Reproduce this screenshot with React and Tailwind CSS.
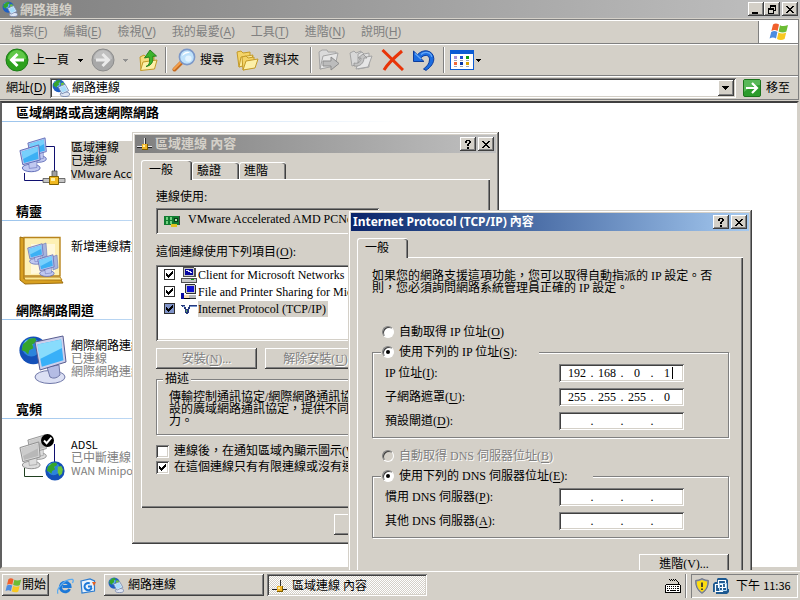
import React from "react";

const RAISED =
  "bg-[#d4d0c8] shadow-[inset_-1px_-1px_0_#404040,inset_1px_1px_0_#fff,inset_-2px_-2px_0_#808080]";
const SUNKEN =
  "shadow-[inset_1px_1px_0_#808080,inset_-1px_-1px_0_#fff,inset_2px_2px_0_#404040,inset_-2px_-2px_0_#d4d0c8]";
const FRAME =
  "bg-[#d4d0c8] shadow-[inset_-1px_-1px_0_#404040,inset_1px_1px_0_#d4d0c8,inset_-2px_-2px_0_#808080,inset_2px_2px_0_#fff]";
const SANS = "font-['Noto_Sans','Noto_Sans_CJK_TC',sans-serif]";
const SMALL_LATIN = "text-[11px] font-['Noto_Sans_CJK_TC',sans-serif]";
const SERIF = "font-['Liberation_Serif','Noto_Sans_CJK_TC',serif]";
const EMBOSS = "text-[#808080] [text-shadow:1px_1px_0_#fff]";

/* ---------- icons ---------- */

function Continents() {
  return (
    <g fill="#35a52c">
      <path d="M2 4 L5 1.4 L8 1 L8.5 3 L6.5 4 L7 6 L5 7 L4.5 9 L3 7.5 L1.3 7z" />
      <path d="M9 4 L11.5 3.5 L12.6 6 L12 9 L10 10.5 L9 8z" fill="#6cc63c" />
    </g>
  );
}

function NetIcon({ size = 17 }) {
  return (
    <svg width={size} height={size} viewBox="0 0 17 17" className="shrink-0" aria-hidden="true">
      <circle cx="6.5" cy="6.5" r="6" fill="#1f5fc4" />
      <circle cx="5" cy="4.6" r="3" fill="#5fb0ee" />
      <g transform="scale(.95)">
        <Continents />
      </g>
      <ellipse cx="12.2" cy="14.4" rx="4.4" ry="2.2" fill="#dfe6f4" stroke="#6d7fa8" strokeWidth=".8" />
      <path d="M6 7.6 L12.4 5 L15.8 11 L9.4 14z" fill="#e6edf8" stroke="#7286ad" strokeWidth=".8" />
      <path d="M7.2 8.2 L12 6.2 L14.4 10.6 L9.8 12.8z" fill="#a8dcfa" />
    </svg>
  );
}

function LanPlug() {
  return (
    <svg width="16" height="14" viewBox="0 0 16 14" shapeRendering="crispEdges" className="shrink-0" aria-hidden="true">
      <path d="M0 10h15v1H0z" fill="#202020" />
      <path d="M0 9h15v1H0z" fill="#e8e8f0" />
      <path d="M8 1h1v7H8z" fill="#303030" />
      <path d="M7 1h1v7H7z" fill="#f0f0f0" />
      <path d="M5 7h6v6H5z" fill="#806000" />
      <path d="M5 7h5v5H5z" fill="#f0b428" />
      <path d="M6 8h2v2H6z" fill="#fff0a0" />
    </svg>
  );
}

function Flag({ size = 20 }) {
  return (
    <svg width={size} height={size} viewBox="0 0 20 20" className="shrink-0" aria-hidden="true">
      <path d="M4 2.5 C6 1 8 1.2 10 2.6 L8.6 9 C6.6 7.8 4.6 7.8 2.4 9z" fill="#f0602c" />
      <path d="M11 3.2 C13 4.4 16 4.4 19 3 L17.4 9.4 C15 10.8 12 10.6 9.6 9.4z" fill="#6cbc34" />
      <path d="M2.2 10 C4.4 8.8 6.4 8.8 8.4 10 L7 16.6 C5 15.2 2.8 15.2 .6 16.6z" fill="#4c8ce0" />
      <path d="M9.4 10.6 C12 11.8 14.6 11.8 17.2 10.6 L15.6 17 C13 18.4 10.4 18.2 8 17z" fill="#f8c820" />
    </svg>
  );
}

function RoundArrow({ forward }) {
  return (
    <svg width="24" height="24" viewBox="0 0 24 24" className="shrink-0" aria-hidden="true">
      <circle cx="12" cy="12" r="11" fill={forward ? "#a8a8a8" : "#2ca01c"} stroke={forward ? "#8c8c8c" : "#1c7c18"} />
      <path d="M3 11 A9 9 0 0 1 21 11 Q12 15 3 11z" fill={forward ? "#c0c0c0" : "#60c848"} />
      <path
        d={forward ? "M5 12 H17 M11.5 6 L17.5 12 L11.5 18" : "M19 12 H7 M12.5 6 L6.5 12 L12.5 18"}
        fill="none"
        stroke={forward ? "#eaeaea" : "#fff"}
        strokeWidth="3"
      />
    </svg>
  );
}

function FolderUp() {
  return (
    <svg width="21" height="23" viewBox="0 0 21 23" className="shrink-0" aria-hidden="true">
      <path d="M2 8 L6 6 L8 8 L16 7 V18 L3 21z" fill="#f6dc7c" stroke="#c49a28" />
      <path d="M2.500 21.500 L5 13 L19 11 L16.500 20z" fill="#fdf0a8" stroke="#c49a28" />
      <path d="M8 17.500 C12 16 12 12 11 8 L6.500 9 L12 1 L18.500 7 L14.800 7.400 C15.500 13 13.500 16.500 8 17.500z" fill="#3cb42c" stroke="#1c7c18" strokeWidth=".9" />
    </svg>
  );
}

function Magnifier() {
  return (
    <svg width="24" height="24" viewBox="0 0 24 24" className="shrink-0" aria-hidden="true">
      <path d="M2.500 21.500 L9.500 14.500" stroke="#c46a20" strokeWidth="4" strokeLinecap="round" />
      <path d="M2 21 L9 14" stroke="#f4a04c" strokeWidth="2" strokeLinecap="round" />
      <circle cx="15" cy="9" r="7.6" fill="#bfe2fb" stroke="#7c98c8" strokeWidth="1.6" />
      <path d="M10 8 A5.5 5.5 0 0 1 18 4.4 Q13 5 10 8z" fill="#fff" />
      <circle cx="16.4" cy="10.6" r="3.2" fill="#e4f4ff" />
    </svg>
  );
}

function Folders() {
  return (
    <svg width="23" height="21" viewBox="0 0 23 21" className="shrink-0" aria-hidden="true">
      <path d="M1 2 L5 1 L7 3 L14 2 V12 L3 17z" fill="#f4d468" stroke="#c49a28" />
      <path d="M3 17 L5 7 L17 5 L14 14z" fill="#fdec9c" stroke="#c49a28" />
      <path d="M6 7 L10 6 L12 8 L18 7 V17 L7 20z" fill="#f4d468" stroke="#c49a28" />
      <path d="M7 20 L10 11 L22 9 L19 18z" fill="#fdf0a8" stroke="#c49a28" />
    </svg>
  );
}

function GrayFolder({ copy }) {
  return (
    <svg width="24" height="22" viewBox="0 0 24 22" className="shrink-0" aria-hidden="true">
      {copy ? (
        <>
          <path d="M1 4 L5 2 L7 4 L12 2 V14 L3 17z" fill="#d8d8d8" stroke="#a4a4a4" />
          <path d="M9 5 L13 3 L15 5 L20 4 V18 L9 20z" fill="#e0e0e0" stroke="#a4a4a4" />
          <path d="M7 20 L11 9 L23 7 L19 18z" fill="#e6e6e6" stroke="#a4a4a4" />
          <path d="M5 14 C9 15 12 13 12 9 L9 9 L14 5 L18 9 L15 9 C15 14 11 18 5 17z" fill="#c4c4c4" stroke="#909090" strokeWidth=".8" />
        </>
      ) : (
        <>
          <path d="M2 3 L5 1 H10 L11 3 H19 V16 L3 20z" fill="#dadada" stroke="#a4a4a4" />
          <path d="M3 20 L6 7 L21 4 L18 17z" fill="#e6e6e6" stroke="#a4a4a4" />
          <path d="M6 12 H14 V8 L22 14.5 L14 21 V17 H6z" fill="#bcbcbc" stroke="#8c8c8c" />
        </>
      )}
    </svg>
  );
}

function RedCross() {
  return (
    <svg width="23" height="22" viewBox="0 0 23 22" className="shrink-0" aria-hidden="true">
      <path d="M1.5 1 L22 21 M21 2 C14 8 7 14 3 21" fill="none" stroke="#e83408" strokeWidth="3" />
    </svg>
  );
}

function UndoIcon() {
  return (
    <svg width="23" height="22" viewBox="0 0 23 22" className="shrink-0" aria-hidden="true">
      <path d="M1.5 2 V12.5 H12 L8.6 9.2 C12 5 18 5.5 17.5 11 C17.3 14.5 15 17.5 11.5 20 L14 21.4 C19 18 22 14 21.8 9.4 C21.2 1 11 -.8 5.4 5.8z" fill="#1c6ce0" stroke="#0c3c9c" />
      <path d="M3 4.5 L9 10 M9 5.5 C13 2 19 3 19.8 8" fill="none" stroke="#64a8f8" strokeWidth="1.2" />
    </svg>
  );
}

function ViewsIcon() {
  return (
    <svg width="24" height="20" viewBox="0 0 24 20" shapeRendering="crispEdges" className="shrink-0" aria-hidden="true">
      <path d="M0 0h24v20H0z" fill="#0c5cd4" />
      <path d="M1 4h22v15H1z" fill="#fff" />
      <path d="M4 6h3v3H4z" fill="#a890d8" />
      <path d="M10 6h3v3h-3z" fill="#1c50d0" />
      <path d="M16 6h3v3h-3z" fill="#10a010" />
      <path d="M4 12h3v3H4z" fill="#f06838" />
      <path d="M10 12h3v3h-3z" fill="#0838a8" />
      <path d="M16 12h3v3h-3z" fill="#d8a000" />
      <path d="M4 10h3v1H4zM10 10h3v1h-3zM16 10h3v1h-3zM4 16h3v1H4zM10 16h3v1h-3zM16 16h3v1h-3z" fill="#a0a8b8" />
    </svg>
  );
}

function GoIcon() {
  return (
    <svg width="18" height="18" viewBox="0 0 18 18" className="shrink-0" aria-hidden="true">
      <rect x=".5" y=".5" width="17" height="17" rx="1.5" fill="#2c9c2c" stroke="#1c741c" />
      <path d="M1 1 H17 V6 Q9 6 1 13z" fill="#58b858" />
      <path d="M3 9 H14 M9 4 L14 9 L9 14" fill="none" stroke="#fff" strokeWidth="2.2" />
    </svg>
  );
}

function DownTri({ fill = "#000" }) {
  return (
    <svg width="5" height="3" viewBox="0 0 5 3" shapeRendering="crispEdges" aria-hidden="true">
      <path d="M0 0h5v1H0zM1 1h3v1H1zM2 2h1v1H2z" fill={fill} />
    </svg>
  );
}

function Pc({ x = 0, y = 0, s = 1, gray }) {
  const screen = gray ? "#b8b8b8" : "#3cb0f4";
  const glow = gray ? "#cccccc" : "#78d0fc";
  const body = gray ? "#dcdcdc" : "#c0c8f0";
  const line = gray ? "#8c8c8c" : "#5c68b4";
  return (
    <g transform={`translate(${x} ${y}) scale(${s})`}>
      <ellipse cx="13" cy="25.5" rx="9.5" ry="4" fill={body} stroke={line} />
      <path d="M10 17 L19 15 L19 25 L11 26z" fill={body} stroke={line} strokeWidth=".6" />
      <path d="M1 7 L21 1 L22.500 17 L4 22z" fill={body} stroke={line} />
      <path d="M2.800 8.200 L19.600 3 L20.800 15.900 L5.200 20.200z" fill={screen} />
      <path d="M2.800 8.200 L19.600 3 L20 8 L4.400 16z" fill={glow} />
    </g>
  );
}

function BigGlobe({ x, y, s }) {
  return (
    <g transform={`translate(${x} ${y}) scale(${s})`}>
      <circle cx="7" cy="7" r="6.8" fill="#1450b8" />
      <circle cx="6" cy="5.5" r="4.5" fill="#2c84dc" />
      <circle cx="4.6" cy="4" r="2" fill="#7cc4f4" />
      <Continents />
    </g>
  );
}

function BigLan() {
  return (
    <svg width="48" height="50" viewBox="0 0 48 50" className="shrink-0" aria-hidden="true">
      <path d="M26 9.5 H35.5 V36 M5.5 36 V43.5 H26" fill="none" stroke="#101070" />
      <Pc x={8} y={0} s={0.86} />
      <Pc x={0} y={7} s={0.94} />
      <path d="M24 41.500h22v4H24z" fill="#c4c4c4" stroke="#505050" strokeWidth=".8" />
      <path d="M33 34h5v6h-5z" fill="#a0a0a0" stroke="#505050" strokeWidth=".8" />
      <path d="M30.500 39.500h9v8h-9z" fill="#f0b820" stroke="#806000" />
      <path d="M32 41h4v3h-4z" fill="#fff0a0" />
    </svg>
  );
}

function BigWizard() {
  return (
    <svg width="48" height="50" viewBox="0 0 48 50" className="shrink-0" aria-hidden="true">
      <path d="M1 1 L5 2 V43 L42 44 L44 47 L6 48 L1 44z" fill="#d8a020" stroke="#9c6c0c" />
      <path d="M5 1.5 H41 V40 H5z" fill="#fdf0b4" stroke="#b8841c" strokeWidth="1.4" />
      <path d="M12 8 H36 V36 L12 38z" fill="#fff8dc" />
      <path d="M5 41 H41 L43 44 H6z" fill="#fce894" stroke="#b8841c" />
      <path d="M22 9 l5 -2 l1 13 l-5 2z" fill="#a8b4dc" stroke="#6878b8" strokeWidth=".6" />
      <Pc x={8} y={7} s={0.72} />
      <path d="M33 21 l5 -2 l1 13 l-5 2z" fill="#a8b4dc" stroke="#6878b8" strokeWidth=".6" />
      <Pc x={18} y={18} s={0.76} />
    </svg>
  );
}

function BigGateway() {
  return (
    <svg width="48" height="50" viewBox="0 0 48 50" className="shrink-0" aria-hidden="true">
      <BigGlobe x={0} y={1} s={2.05} />
      <ellipse cx="31" cy="42" rx="15" ry="6.5" fill="#dce0f4" stroke="#7078a8" />
      <path d="M28 32 L40 30 L41 40 Q36 45 31 42z" fill="#b4bce4" stroke="#7078a8" />
      <path d="M16 7 L44 1 L47 27 L21 35z" fill="#ccd0ec" stroke="#585c90" />
      <path d="M18.500 9.600 L42 4.400 L44.400 25.200 L22.800 31.800z" fill="#38b0f8" />
      <path d="M18.500 9.600 L42 4.400 L43 13 L21 24z" fill="#88dcfc" />
    </svg>
  );
}

function BigAdsl() {
  return (
    <svg width="48" height="50" viewBox="0 0 48 50" className="shrink-0" aria-hidden="true">
      <path d="M35.5 10 V30" fill="none" stroke="#101070" />
      <path d="M5.5 34 V42.5 H24" fill="none" stroke="#204020" />
      <Pc x={8} y={0} s={0.86} gray />
      <Pc x={0} y={7} s={0.94} gray />
      <circle cx="28.5" cy="6.5" r="6.5" fill="#000" />
      <path d="M25 6.5 L27.6 9.2 L32.4 3.6" fill="none" stroke="#fff" strokeWidth="2" />
      <BigGlobe x={26} y={27} s={1.42} />
    </svg>
  );
}

function CardIcon() {
  return (
    <svg width="16" height="13" viewBox="0 0 16 13" shapeRendering="crispEdges" className="shrink-0" aria-hidden="true">
      <path d="M0 1h15v9H0z" fill="#107c30" />
      <path d="M2 2h2v3H2zM6 2h2v3H6zM2 6h2v3H2zM6 6h2v3H6z" fill="#70d080" />
      <path d="M10 3h4v4h-4z" fill="#084018" />
      <path d="M11 4h2v2h-2z" fill="#b0e0b0" />
      <path d="M7 9h6v3H7z" fill="#e0c020" />
      <path d="M15 1h1v9h-1z" fill="#404040" />
    </svg>
  );
}

function ClientIcon() {
  return (
    <svg width="16" height="16" viewBox="0 0 16 16" shapeRendering="crispEdges" className="shrink-0" aria-hidden="true">
      <path d="M2 0h11v10H2z" fill="#c8c8c8" />
      <path d="M2 0h11v1H2zM2 0h1v10H2z" fill="#505050" />
      <path d="M4 2h8v6H4z" fill="#0808a0" />
      <path d="M5 3h3v1H5zM7 4h3v1H7zM9 5h2v1H9z" fill="#e0e0ff" />
      <path d="M13 1h2v9h-2zM3 9h11v1H3z" fill="#505050" />
      <path d="M0 11h15v4H0z" fill="#c8c8c8" stroke="#505050" strokeWidth="1" />
      <path d="M10 12h3v1h-3z" fill="#10a010" />
    </svg>
  );
}

function ShareIcon() {
  return (
    <svg width="16" height="16" viewBox="0 0 16 16" shapeRendering="crispEdges" className="shrink-0" aria-hidden="true">
      <path d="M4 0h10v9H4z" fill="#c8c8c8" />
      <path d="M4 0h10v1H4zM4 0h1v9H4zM14 1h1v9h-1zM5 9h9v1H5z" fill="#303030" />
      <path d="M6 2h7v6H6z" fill="#1010d0" />
      <path d="M5 11h10v4H5z" fill="#b8b8b8" />
      <path d="M5 14h10v1H5z" fill="#303030" />
      <path d="M0 9h3v6H0z" fill="#0808a0" />
      <path d="M3 11h5v3H3z" fill="#f4dcb8" />
      <path d="M3 14h6v1H3z" fill="#000" />
    </svg>
  );
}

function ProtocolIcon() {
  return (
    <svg width="16" height="12" viewBox="0 0 16 12" shapeRendering="crispEdges" className="shrink-0" aria-hidden="true">
      <path d="M0 2h4v1H0zM8 2h8v1H8zM1 3h3v1H1zM8 3h8v1H8zM3 4h2v2H3zM7 4h2v2H7zM4 6h4v4H4zM5 10h2v1H5z" fill="#24387c" />
      <path d="M9 3h7v1H9zM2 3h2v1H2z" fill="#7898d0" />
      <path d="M5 7h1v2H5z" fill="#60a860" />
    </svg>
  );
}

function IeIcon() {
  return (
    <svg width="17" height="17" viewBox="0 0 17 17" className="shrink-0" aria-hidden="true">
      <path d="M12.6 11 A4.8 4.8 0 1 1 13 8.6 H5.4" fill="none" stroke="#1c78d8" strokeWidth="3" />
      <path d="M1 15.6 C-1.6 11 8 .6 15.6 1.4 C16.6 2.2 16.2 3.8 15.4 5" fill="none" stroke="#5cacf0" strokeWidth="1.3" />
    </svg>
  );
}

function OutlookIcon() {
  return (
    <svg width="17" height="16" viewBox="0 0 17 16" className="shrink-0" aria-hidden="true">
      <path d="M1 3 L10 1 L14.500 3 V13 L2 15z" fill="#e8f2fc" stroke="#2c7cd0" strokeWidth="1.2" />
      <path d="M11.600 9.600 A3.600 3.600 0 1 1 9.800 5.400 M8 8.400 H12" fill="none" stroke="#1c78d8" strokeWidth="2" />
      <path d="M12 4 H16 L14 8z" fill="#e86020" />
    </svg>
  );
}

function KeyboardIcon() {
  return (
    <svg width="16" height="14" viewBox="0 0 16 14" shapeRendering="crispEdges" className="shrink-0" aria-hidden="true">
      <path d="M4 0h1v1H4zM5 1h1v1H5zM6 0h1v1H6zM7 1h1v1H7zM8 0h1v1H8zM9 1h1v1H9zM10 0h1v1h-1zM11 1h1v1h-1zM12 2h1v1h-1zM13 3h1v2h-1z" fill="#000" />
      <path d="M1 5h14v1H1zM0 6h1v7H0zM15 6h1v7h-1zM0 13h16v1H0z" fill="#000" />
      <path d="M1 6h14v7H1z" fill="#fff" />
      <path d="M2 7h1v1H2zM4 7h1v1H4zM6 7h1v1H6zM8 7h1v1H8zM10 7h1v1h-1zM12 7h2v1h-2zM2 9h1v1H2zM4 9h1v1H4zM6 9h1v1H6zM8 9h1v1H8zM10 9h1v1h-1zM12 9h2v1h-2zM2 11h2v1H2zM5 11h6v1H5zM12 11h2v1h-2z" fill="#000" />
    </svg>
  );
}

function ShieldIcon() {
  return (
    <svg width="14" height="16" viewBox="0 0 14 16" className="shrink-0" aria-hidden="true">
      <path d="M7 .6 Q10 2.4 13.4 2.4 Q13.8 11 7 15.4 Q.2 11 .6 2.4 Q4 2.4 7 .6z" fill="#8c94a8" stroke="#5c6478" strokeWidth=".8" />
      <path d="M7 2 Q9.6 3.4 12.2 3.5 Q12.4 10.4 7 14 Q1.6 10.4 1.8 3.5 Q4.4 3.4 7 2z" fill="#fcdc10" />
      <path d="M7 4.4 V9 M7 10.4 V12" stroke="#303030" strokeWidth="1.7" />
    </svg>
  );
}

function VmIcon() {
  return (
    <svg width="16" height="16" viewBox="0 0 16 16" className="shrink-0" aria-hidden="true">
      <path d="M5 0h8l2 2v9h1v3l-2 2H3v-2H0V6l2-2h2V1z" fill="#1c5890" />
      <path d="M5.500 2.500h7v7h-7zM2.500 6.500h7v7h-7z" fill="none" stroke="#fff" strokeWidth="1.2" />
      <path d="M6.500 5.500h7v7h-7z" fill="none" stroke="#b8dcf8" />
    </svg>
  );
}

/* ---------- shared controls ---------- */

function CaptionButton({ kind, label }) {
  return (
    <button type="button" aria-label={label} className={`flex h-[14px] w-4 items-center justify-center ${RAISED}`}>
      <svg width="10" height="9" viewBox="0 0 10 9" shapeRendering="crispEdges" aria-hidden="true">
        {kind === "close" && (
          <path d="M1 1h2v1h1v1h2V2h1V1h2v1H8v1H7v1H6v1h1v1h1v1h1v1H7V7H6V6H4v1H3v1H1V7h1V6h1V5h1V4H3V3H2V2H1z" fill="#000" />
        )}
        {kind === "min" && <path d="M1 7h6v2H1z" fill="#000" />}
        {kind === "restore" && (
          <path d="M3 0h6v2H3zM8 2h1v4H7V5h1zM3 2h1v1H3zM1 3h6v2H1zM1 5h1v4H1zM6 5h1v4H6zM2 8h4v1H2z" fill="#000" />
        )}
        {kind === "help" && (
          <path d="M3 0h4v1H3zM2 1h2v2H2zM6 1h2v2H6zM5 3h2v1H5zM4 4h2v2H4zM4 7h2v2H4z" fill="#000" />
        )}
      </svg>
    </button>
  );
}

function Hot({ text, k }) {
  return (
    <>
      {text}(<u className="underline-offset-2">{k}</u>)
    </>
  );
}

function CheckBox({ id, checked, shaded }) {
  return (
    <span className="grid shrink-0">
      <input
        id={id}
        type="checkbox"
        defaultChecked={checked}
        className={
          shaded === undefined
            ? `col-start-1 row-start-1 size-[13px] appearance-none bg-white ${SUNKEN}`
            : `col-start-1 row-start-1 size-[11px] appearance-none border border-[#303030] ${shaded ? "bg-[#7f93c8]" : "bg-white"}`
        }
      />
      {checked && (
        <svg viewBox="0 0 7 7" shapeRendering="crispEdges" className="pointer-events-none col-start-1 row-start-1 size-[7px] self-center justify-self-center" aria-hidden="true">
          <path d="M0 2h1v3H0zM1 3h1v3H1zM2 4h1v3H2zM3 3h1v3H3zM4 2h1v3H4zM5 1h1v3H5zM6 0h1v3H6z" fill="#000" />
        </svg>
      )}
    </span>
  );
}

function Radio({ id, name, checked, disabled, children }) {
  return (
    <span className="flex h-4 items-center">
      <span className="grid shrink-0">
        <input
          id={id}
          name={name}
          type="radio"
          defaultChecked={checked}
          disabled={disabled}
          className={`col-start-1 row-start-1 size-3 appearance-none rounded-full border border-t-[#808080] border-r-white border-b-white border-l-[#808080] shadow-[inset_1px_1px_0_#404040] ${disabled ? "bg-[#d4d0c8]" : "bg-white"}`}
        />
        {checked && (
          <span className="pointer-events-none col-start-1 row-start-1 size-1 self-center justify-self-center rounded-full bg-black" />
        )}
      </span>
      <label htmlFor={id} className={`pl-[5px] whitespace-nowrap ${disabled ? EMBOSS : ""}`}>
        {children}
      </label>
    </span>
  );
}

const IP_FIELD = "h-[14px] w-[26px] bg-transparent p-0 text-center outline-none";

function IpRow({ id, label, values = ["", "", "", ""], caret }) {
  return (
    <div role="group" aria-labelledby={id} className="flex h-[18px] items-center justify-between pr-11 pl-3">
      <span id={id}>{label}:</span>
      <span className={`flex h-[18px] w-[125px] items-center bg-white pl-[5px] ${SUNKEN}`}>
        {values.map((v, i) => (
          <React.Fragment key={i}>
            {i > 0 && <span className="w-1 text-center">.</span>}
            <span className="relative flex">
              <input aria-label={`${i + 1}`} defaultValue={v} className={IP_FIELD} />
              {caret && i === 3 && <span className="absolute top-px right-[7px] h-3 w-px bg-black" />}
            </span>
          </React.Fragment>
        ))}
      </span>
    </div>
  );
}

function Tab({ active, children }) {
  return (
    <button
      type="button"
      role="tab"
      aria-selected={!!active}
      className={`flex justify-start rounded-t-[3px] border-t border-l border-white bg-[#d4d0c8] shadow-[inset_-1px_0_0_#404040,inset_-2px_0_0_#808080] ${
        active ? "-mb-px h-5 w-[51px] items-center pb-px pl-[7px]" : "h-[17px] w-[47px] items-center pl-1"
      }`}
    >
      {children}
    </button>
  );
}

const PANEL = "border-t border-l border-white shadow-[inset_-1px_-1px_0_#404040,inset_-2px_-2px_0_#808080]";
const ETCHED = "border border-[#808080] shadow-[inset_1px_1px_0_#fff,1px_1px_0_#fff]";

/* ---------- explorer window ---------- */

const MENUS = [
  ["檔案", "F"],
  ["編輯", "E"],
  ["檢視", "V"],
  ["我的最愛", "A"],
  ["工具", "T"],
  ["進階", "N"],
  ["說明", "H"],
];

const GROUPS = [
  { title: "區域網路或高速網際網路", icon: <BigLan />, lines: ["區域連線", "已連線", "VMware Accelerated A..."], selected: true },
  { title: "精靈", icon: <BigWizard />, lines: ["新增連線精靈"] },
  { title: "網際網路閘道", icon: <BigGateway />, lines: ["網際網路連線", "已連線", "網際網路連線"] },
  { title: "寬頻", icon: <BigAdsl />, lines: ["ADSL", "已中斷連線", "WAN Miniport (PPPOE)"] },
];

const BAND = "border-t border-b border-t-white border-b-[#808080]";

function Separator() {
  return <span className="h-[26px] w-[2px] border-l border-l-[#808080] bg-white" />;
}

function Explorer() {
  return (
    <section className={`flex h-full flex-col bg-[#d4d0c8] text-xs ${SANS}`}>
      <header className="flex h-[18px] items-center bg-linear-to-r from-[#808080] to-[#c0c0c0] pr-[2px] pl-[2px]">
        <NetIcon size={16} />
        <h1 className="flex-1 pl-[2px] text-[13px] leading-4 font-bold text-[#d4d0c8]">網路連線</h1>
        <div className="flex">
          <CaptionButton kind="min" label="最小化" />
          <CaptionButton kind="restore" label="還原" />
          <span className="w-[2px]" />
          <CaptionButton kind="close" label="關閉" />
        </div>
      </header>
      <div className="mt-px mr-px border-t border-r border-[#808080]">
        <div className={`flex h-6 ${BAND}`}>
          <nav className="flex flex-1 items-center gap-4 pl-[10px] text-[#808080]">
            {MENUS.map(([t, k]) => (
              <button key={t} type="button" className="leading-4">
                <Hot text={t} k={k} />
              </button>
            ))}
          </nav>
          <div className="flex w-10 items-center justify-center border-l border-[#808080] bg-white">
            <Flag />
          </div>
        </div>
        <div className={`flex h-8 items-center pl-[5px] ${BAND}`}>
          <button type="button" className="flex items-center gap-1 pr-[9px]">
            <RoundArrow />
            上一頁
          </button>
          <DownTri />
          <button type="button" aria-label="下一頁" className="pr-2 pl-2">
            <RoundArrow forward />
          </button>
          <DownTri fill="#909090" />
          <button type="button" aria-label="往上" className="pr-[6px] pl-[10px]">
            <FolderUp />
          </button>
          <Separator />
          <button type="button" className="flex items-center gap-1 pr-3 pl-[5px]">
            <Magnifier />
            搜尋
          </button>
          <button type="button" className="flex items-center gap-1 pr-[11px]">
            <Folders />
            資料夾
          </button>
          <Separator />
          <span className="flex items-center gap-2 pr-2 pl-[5px]">
            <button type="button" aria-label="移至資料夾"><GrayFolder /></button>
            <button type="button" aria-label="複製到資料夾"><GrayFolder copy /></button>
            <button type="button" aria-label="刪除"><RedCross /></button>
            <button type="button" aria-label="復原"><UndoIcon /></button>
          </span>
          <Separator />
          <button type="button" aria-label="檢視方式" className="flex items-center gap-[2px] pl-[5px]">
            <ViewsIcon />
            <DownTri />
          </button>
        </div>
        <div className={`flex h-6 items-center pl-[6px] ${BAND}`}>
          <label htmlFor="addr" className="w-11 whitespace-nowrap">
            <Hot text="網址" k="D" />
          </label>
          <div className={`flex h-5 flex-1 items-center bg-white p-[2px] ${SUNKEN}`}>
            <NetIcon size={18} />
            <input id="addr" defaultValue="網路連線" className="h-4 min-w-0 flex-1 bg-transparent pl-[2px] outline-none" />
            <button type="button" aria-label="展開" className={`flex h-4 w-4 items-center justify-center ${RAISED}`}>
              <svg width="7" height="4" viewBox="0 0 7 4" shapeRendering="crispEdges" aria-hidden="true">
                <path d="M0 0h7v1H0zM1 1h5v1H1zM2 2h3v1H2zM3 3h1v1H3z" fill="#000" />
              </svg>
            </button>
          </div>
          <button type="button" className="flex items-center gap-[5px] pr-2 pl-[7px]">
            <GoIcon />
            移至
          </button>
        </div>
      </div>
      <main className="mt-px mr-px mb-px min-h-0 flex-1 overflow-hidden border-2 border-t-[#404040] border-r-[#d4d0c8] border-b-[#d4d0c8] border-l-[#606060] bg-white">
        {GROUPS.map((g) => (
          <section key={g.title} className="h-[99px]">
            <h2 className="h-[18px] pl-[14px] text-[13px] leading-[18px] font-bold">{g.title}</h2>
            <div className="h-px w-1/2 bg-linear-to-r from-[#9cc4ec] to-white" />
            <div className="flex gap-1 pt-[15px] pl-[17px]">
              {g.icon}
              <p className={`mt-1 self-start leading-[13px] whitespace-nowrap ${g.selected ? "bg-[#d4d0c8]" : ""}`}>
                {g.lines.map((l, i) => (
                  <span
                    key={i}
                    className={`block ${i > 0 && !g.selected ? "text-[#808080]" : ""} ${/^[A-Z]/.test(l) ? SMALL_LATIN : ""}`}
                  >
                    {l}
                  </span>
                ))}
              </p>
            </div>
          </section>
        ))}
      </main>
    </section>
  );
}

/* ---------- dialogs ---------- */

const ITEMS = [
  ["Client for Microsoft Networks", <ClientIcon />],
  ["File and Printer Sharing for Microsoft Networks", <ShareIcon />],
  ["Internet Protocol (TCP/IP)", <ProtocolIcon />],
];

function LanDialog() {
  return (
    <section
      role="dialog"
      aria-label="區域連線 內容"
      className={`absolute top-[132px] left-[132px] w-[367px] p-[3px] text-xs ${SERIF} ${FRAME}`}
    >
      <header className="flex h-[18px] items-center bg-linear-to-r from-[#808080] to-[#c0c0c0] pr-[2px] pl-[2px]">
        <LanPlug />
        <h2 className="flex-1 pl-[2px] text-[13px] leading-4 font-bold text-[#d4d0c8]">區域連線 內容</h2>
        <div className="flex gap-[2px]">
          <CaptionButton kind="help" label="說明" />
          <CaptionButton kind="close" label="關閉" />
        </div>
      </header>
      <div className="px-[6px] pt-[7px] pb-[6px]">
        <div role="tablist" className="flex h-[19px] items-end">
          <Tab active>一般</Tab>
          <Tab>驗證</Tab>
          <Tab>進階</Tab>
        </div>
        <div className={`h-[329px] px-[14px] pt-[9px] ${PANEL}`}>
          <p className="leading-4">連線使用:</p>
          <div className={`mt-[3px] flex h-[26px] w-[223px] items-center gap-2 pl-2 whitespace-nowrap ${SUNKEN}`}>
            <CardIcon />
            <span className="pb-1">VMware Accelerated AMD PCNet</span>
          </div>
          <p className="mt-[10px] leading-4">
            <Hot text="這個連線使用下列項目" k="O" />:
          </p>
          <ul className={`mt-[5px] h-[76px] overflow-hidden bg-white px-2 py-px ${SUNKEN}`}>
            {ITEMS.map(([t, icon], i) => (
              <li key={t} className="flex h-[17px] items-center">
                <CheckBox id={`item${i}`} checked shaded={i === 2} />
                <span className="flex pr-px pl-[6px]">{icon}</span>
                <label htmlFor={`item${i}`} className={`pr-[2px] leading-4 whitespace-nowrap ${i === 2 ? "bg-[#d4d0c8]" : ""}`}>
                  {t}
                </label>
              </li>
            ))}
          </ul>
          <div className="mt-[7px] flex gap-2">
            <button type="button" disabled className={`h-[21px] w-[101px] ${RAISED}`}>
              <span className={EMBOSS}><Hot text="安裝" k="N" />...</span>
            </button>
            <button type="button" disabled className={`h-[21px] w-[101px] ${RAISED}`}>
              <span className={EMBOSS}><Hot text="解除安裝" k="U" /></span>
            </button>
          </div>
          <fieldset className={`mt-[2px] h-16 pl-3 ${ETCHED}`}>
            <legend className="-ml-[6px] bg-[#d4d0c8] px-[2px] leading-4">描述</legend>
            <p className="pt-1 leading-3 whitespace-nowrap">
              傳輸控制通訊協定/網際網路通訊協定。這是預
              <br />
              設的廣域網路通訊協定，提供不同網路之間的通訊能
              <br />
              力。
            </p>
          </fieldset>
          <div className="mt-2 flex h-4 items-center gap-[5px] whitespace-nowrap">
            <CheckBox id="notify" />
            <label htmlFor="notify"><Hot text="連線後，在通知區域內顯示圖示" k="W" /></label>
          </div>
          <div className="flex h-4 items-center gap-[5px] whitespace-nowrap">
            <CheckBox id="limited" checked />
            <label htmlFor="limited"><Hot text="在這個連線只有有限連線或沒有連線時通知我" k="M" /></label>
          </div>
        </div>
        <div className="mt-[6px] flex justify-end">
          <button type="button" aria-label="確定" className={`h-[21px] w-[156px] ${RAISED}`} />
        </div>
      </div>
    </section>
  );
}

function TcpDialog() {
  return (
    <section
      role="dialog"
      aria-label="Internet Protocol (TCP/IP) 內容"
      className={`absolute top-[210px] left-[348px] w-[404px] p-[3px] text-xs ${SERIF} ${FRAME}`}
    >
      <header className="flex h-[18px] items-center bg-linear-to-r from-[#0a246a] to-[#a6caf0] pr-[2px] pl-[2px]">
        <h2 className={`flex-1 text-xs leading-4 font-bold text-white ${SANS}`}>Internet Protocol (TCP/IP) 內容</h2>
        <div className="flex gap-[2px]">
          <CaptionButton kind="help" label="說明" />
          <CaptionButton kind="close" label="關閉" />
        </div>
      </header>
      <div className="px-[6px] pt-[7px]">
        <div role="tablist" className="flex h-[19px] items-end">
          <Tab active>一般</Tab>
        </div>
        <div className={`px-[14px] pt-3 pb-6 ${PANEL}`}>
          <p className="leading-3 whitespace-nowrap">
            如果您的網路支援這項功能，您可以取得自動指派的 IP 設定。否
            <br />
            則，您必須詢問網路系統管理員正確的 IP 設定。
          </p>
          <div className="mt-[30px] pl-[10px]">
            <Radio id="ip-auto" name="ip"><Hot text="自動取得 IP 位址" k="O" /></Radio>
          </div>
          <fieldset className={`mt-1 flex flex-col pb-[7px] ${ETCHED}`}>
            <legend className="ml-2 w-[158px] bg-[#d4d0c8] pl-px">
              <Radio id="ip-manual" name="ip" checked><Hot text="使用下列的 IP 位址" k="S" />:</Radio>
            </legend>
            <div className="flex flex-col gap-[6px] pt-1">
              <IpRow id="f-ip" label={<Hot text="IP 位址" k="I" />} values={["192", "168", "0", "1"]} caret />
              <IpRow id="f-mask" label={<Hot text="子網路遮罩" k="U" />} values={["255", "255", "255", "0"]} />
              <IpRow id="f-gw" label={<Hot text="預設閘道" k="D" />} />
            </div>
          </fieldset>
          <div className="mt-[10px] pl-[10px]">
            <Radio id="dns-auto" name="dns" disabled><Hot text="自動取得 DNS 伺服器位址" k="B" /></Radio>
          </div>
          <fieldset className={`mt-1 flex flex-col pb-[7px] ${ETCHED}`}>
            <legend className="ml-2 w-[212px] bg-[#d4d0c8] pl-px">
              <Radio id="dns-manual" name="dns" checked><Hot text="使用下列的 DNS 伺服器位址" k="E" />:</Radio>
            </legend>
            <div className="flex flex-col gap-[6px] pt-1">
              <IpRow id="f-dns1" label={<Hot text="慣用 DNS 伺服器" k="P" />} />
              <IpRow id="f-dns2" label={<Hot text="其他 DNS 伺服器" k="A" />} />
            </div>
          </fieldset>
          <div className="mt-4 flex justify-end">
            <button type="button" className={`h-[21px] w-[90px] pb-[2px] ${RAISED}`}>
              <Hot text="進階" k="V" />...
            </button>
          </div>
        </div>
      </div>
    </section>
  );
}

/* ---------- taskbar ---------- */

function Taskbar() {
  return (
    <footer className={`flex h-[30px] shrink-0 items-start bg-[#d4d0c8] px-[2px] pt-1 text-xs shadow-[inset_0_1px_0_#d4d0c8,inset_0_2px_0_#fff] ${SANS}`}>
      <button type="button" className={`flex h-[22px] w-[47px] items-center pl-[3px] ${RAISED}`}>
        <Flag size={17} />
        開始
      </button>
      <div className="flex h-6 w-[55px] items-center gap-[6px] pl-2">
        <button type="button" aria-label="Internet Explorer"><IeIcon /></button>
        <button type="button" aria-label="Outlook Express"><OutlookIcon /></button>
      </div>
      <button type="button" className={`flex h-[22px] w-40 items-center gap-1 pl-1 ${RAISED}`}>
        <NetIcon size={16} />
        網路連線
      </button>
      <button
        type="button"
        className={`ml-[3px] flex h-[22px] w-40 items-center gap-1 bg-[repeating-conic-gradient(#fff_0_25%,#d4d0c8_0_50%)] bg-size-[2px_2px] pt-[2px] pl-[5px] ${SUNKEN}`}
      >
        <LanPlug />
        區域連線 內容
      </button>
      <span className="flex-1" />
      <span className="flex h-6 items-center">
        <KeyboardIcon />
      </span>
      <span className="ml-1 h-6 w-[2px] border-l border-[#808080] bg-white" />
      <div className="ml-1 flex h-6 w-[107px] items-center gap-1 pl-1 shadow-[inset_1px_1px_0_#808080,inset_-1px_-1px_0_#fff]">
        <ShieldIcon />
        <VmIcon />
        <time className="pl-[3px] whitespace-nowrap">
          下午 <span className={SMALL_LATIN}>11:36</span>
        </time>
      </div>
    </footer>
  );
}

export default function App() {
  return (
    <div className="flex h-screen w-full flex-col overflow-hidden bg-[#d4d0c8] text-black">
      <div className="relative min-h-0 flex-1 overflow-hidden">
        <Explorer />
        <LanDialog />
        <TcpDialog />
      </div>
      <Taskbar />
    </div>
  );
}
